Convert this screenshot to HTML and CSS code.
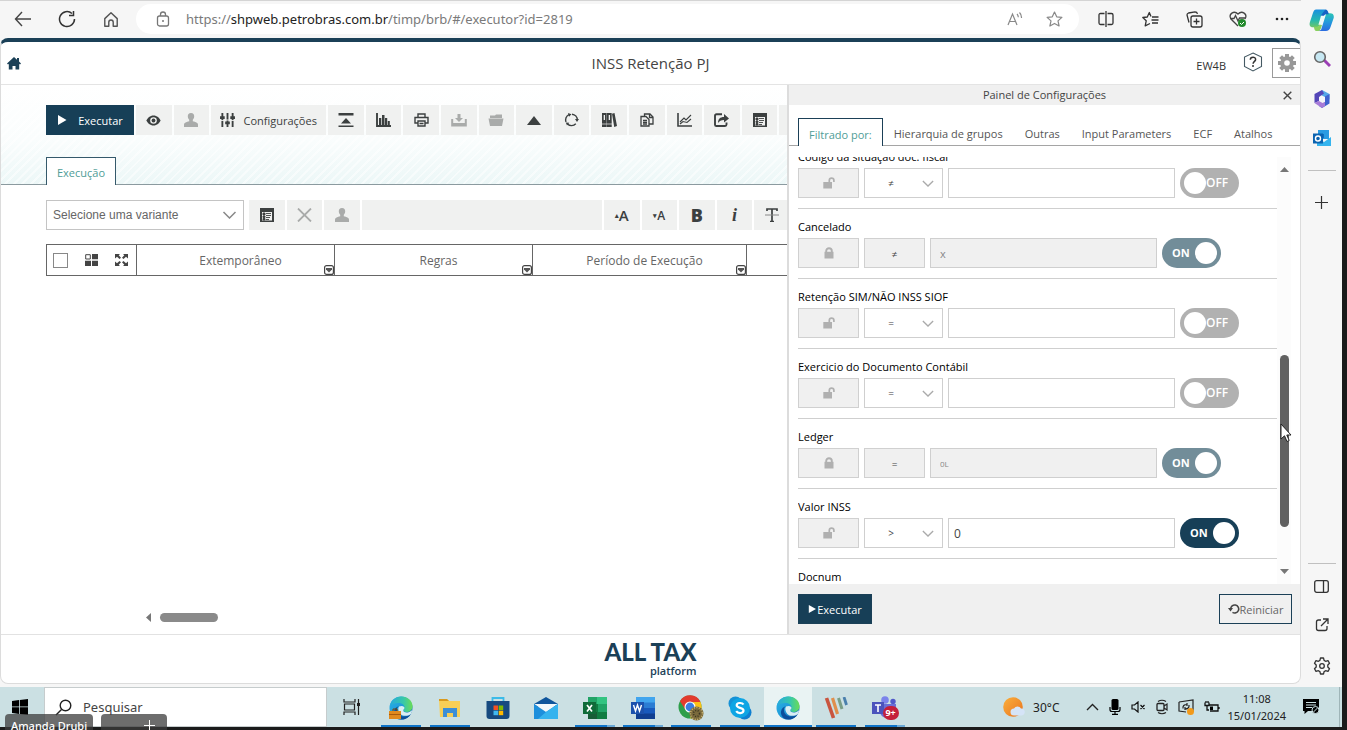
FILE: index.html
```html
<!DOCTYPE html>
<html lang="pt-BR">
<head>
<meta charset="utf-8">
<title>INSS Retenção PJ</title>
<link rel="stylesheet" href="styles.css">
</head>
<body>
<svg class="defs" aria-hidden="true">
  <defs>
    <linearGradient id="edge-a" x1="0" y1="0" x2="1" y2="1"><stop offset="0" stop-color="#2bb3e8"/><stop offset=".5" stop-color="#1f9bd8"/><stop offset="1" stop-color="#0c59a4"/></linearGradient>
    <linearGradient id="edge-b" x1="0" y1="0" x2="1" y2="0"><stop offset="0" stop-color="#27a9dd"/><stop offset=".6" stop-color="#38c8a8"/><stop offset="1" stop-color="#6bdc55"/></linearGradient>
    <linearGradient id="cop" x1="0" y1="0" x2="0" y2="1"><stop offset="0" stop-color="#1a8fe0"/><stop offset=".6" stop-color="#25b8b0"/><stop offset="1" stop-color="#6cc66a"/></linearGradient>
    <linearGradient id="cop2" x1="0" y1="0" x2="0" y2="1"><stop offset="0" stop-color="#2cc5b5"/><stop offset=".5" stop-color="#2399dc"/><stop offset="1" stop-color="#2a6be0"/></linearGradient>
    <linearGradient id="sun" x1="0" y1="0" x2="1" y2="1"><stop offset="0" stop-color="#fbb03b"/><stop offset="1" stop-color="#e8731f"/></linearGradient>
  </defs>
  <symbol id="user" viewBox="0 0 16 16"><path d="M8 1c2.300 0 3.200 1.500 3.200 3.300 0 1.500-.6 2.700-1.400 3.500v1.500c2.700.7 5.200 1.500 5.200 3.200V15H1v-2.500c0-1.700 2.500-2.500 5.200-3.200V7.800C5.400 7 4.800 5.800 4.800 4.300 4.800 2.500 5.700 1 8 1z" fill="currentColor"/></symbol>
  <symbol id="form" viewBox="0 0 16 16"><path d="M1 1h14v14H1zM3 5v8.500h10V5z" fill="currentColor" fill-rule="evenodd"/><path d="M4 6h2v2H4zM4 9h2v1.500H4zM4 11.500h2V13H4zM7 6.500h5M7 8.500h5M7 10.500h4M7 12.500h3" stroke="currentColor" fill="currentColor" stroke-width=".9"/></symbol>
  <symbol id="chev" viewBox="0 0 14 8"><path d="M1 1l6 6 6-6" fill="none" stroke="currentColor" stroke-width="1.500"/></symbol>
  <symbol id="lock" viewBox="0 0 12 12"><path d="M3.200 5V4a2.800 2.800 0 0 1 5.600 0v1" fill="none" stroke="currentColor" stroke-width="1.900"/><path d="M1.500 4.800h9v6.700h-9z" fill="currentColor"/></symbol>
  <symbol id="unlock" viewBox="0 0 12 12"><path d="M6.300 6V3.500a2.300 2.300 0 0 1 4.600 0V5" fill="none" stroke="currentColor" stroke-width="1.700"/><path d="M.3 5h8.700v6.500H.3z" fill="currentColor"/></symbol>
  <symbol id="menu" viewBox="0 0 10 10"><rect x=".6" y=".6" width="8.800" height="8.800" rx="2" fill="#fff" stroke="#444" stroke-width="1.200"/><path d="M2 3h6v1.500L5 7.500 2 4.500z" fill="#555"/></symbol>
  <symbol id="play" viewBox="0 0 10 10"><path d="M1 0l8.500 5L1 10z" fill="currentColor"/></symbol>
  <symbol id="edge" viewBox="0 0 24 24"><circle cx="12" cy="12" r="11.500" fill="url(#edge-a)"/><path d="M1 10C2 4 7 .5 12.500.5 19 .5 23.500 5 23.500 10c0 4-3 6-6 6-3 0-3.600-1.200-3-2 .8-1 1-1.600 1-2.500C15.500 9 13 7 9.500 7 5.500 7 2.300 8.500 1 10z" fill="url(#edge-b)"/><path d="M8 13c-.5 5 3.500 8 8 7.500 2.500-.2 4.500-1.200 6-2.500-2 3.500-5.500 5.500-9.500 5.500C7 23.500 4.500 19 5 15.500 5.500 12 8 10.500 10 10.500 8.700 11 8.100 12 8 13z" fill="#0b4f9c"/><path d="M10 10.500c3.500-1.500 5.500 0 5.500 1.500-.2 1-1.400 1.600-1.200 2.700.3 1.500 3 2.400 6 1.200 1.300-.4 2.300-1.200 2.900-2.200-.1 1.800-.8 3.500-1.700 4.600-3 2.200-8 2.100-10.200-.4-2-2.300-2.600-5.500-1.300-7.400z" fill="#d9eef3"/></symbol>
</svg>

<div class="screen">
  <div class="window">
    <div class="browser">
      <nav class="bar" aria-label="Navegador">
        <button class="nav" aria-label="Voltar"><svg width="18" height="16" viewBox="0 0 18 16"><path d="M17 8H1.500M8 1L1.500 8 8 15" fill="none" stroke="#444" stroke-width="1.400"/></svg></button>
        <button class="nav" aria-label="Atualizar"><svg width="18" height="18" viewBox="0 0 18 18"><path d="M16.500 9A7.500 7.500 0 1 1 14 3.500M15.500 1v4.500H11" fill="none" stroke="#333" stroke-width="1.500"/></svg></button>
        <button class="nav" aria-label="Início"><svg width="16" height="17" viewBox="0 0 18 18"><path d="M2 8l7-6.500L16 8v8.500h-4.500V12a2.500 2.500 0 0 0-5 0v4.500H2z" fill="none" stroke="#555" stroke-width="1.600" stroke-linejoin="round"/></svg></button>
        <div class="address">
          <svg width="14" height="16" viewBox="0 0 14 16"><rect x="1.500" y="5" width="11" height="10" rx="2" fill="none" stroke="#777" stroke-width="1.300"/><path d="M4.500 5V3.500a2.500 2.500 0 0 1 5 0V5" fill="none" stroke="#777" stroke-width="1.300"/><circle cx="7" cy="10" r="1" fill="#777"/></svg>
          <a class="url" href="#">https://<b>shpweb.petrobras.com.br</b>/timp/brb/#/executor?id=2819</a>
          <button class="small" aria-label="Ler em voz alta"><svg width="16" height="16" viewBox="0 0 16 16"><path d="M1 14L5.500 3 10 14M2.500 10.500h6M10 3c1 1 1.300 2 1.300 3.300M12.500 1.500C14 3 14.600 5 14.500 7" fill="none" stroke="#888" stroke-width="1.200"/></svg></button>
          <button class="small" aria-label="Favorito"><svg width="17" height="16" viewBox="0 0 17 16"><path d="M8.500 1l2.200 4.800 5.200.6-3.900 3.500 1.100 5.100-4.600-2.600L3.900 15 5 9.900 1.100 6.400l5.200-.6z" fill="none" stroke="#888" stroke-width="1.200" stroke-linejoin="round"/></svg></button>
        </div>
        <div class="tools">
          <button class="nav" aria-label="Tela dividida"><svg width="16" height="16" viewBox="0 0 16 16"><path d="M6.500 2.500h-4q-1.500 0-1.500 1.500v8q0 1.500 1.500 1.500h4M9.500 2.500h4Q15 2.500 15 4v8q0 1.500-1.500 1.500h-4M8 0v16" fill="none" stroke="#333" stroke-width="1.300"/></svg></button>
          <button class="nav" aria-label="Favoritos"><svg width="17" height="16" viewBox="0 0 17 16"><path d="M9 5.500L7.300 1.500 5.300 6l-4.500.5 3.400 3.300-1 5L8 12.500M10 6h6.500M9.500 9h7M10 12h6" fill="none" stroke="#333" stroke-width="1.300" stroke-linejoin="round"/></svg></button>
          <button class="nav" aria-label="Coleções"><svg width="17" height="17" viewBox="0 0 17 17"><rect x="5" y="5" width="11" height="11" rx="2" fill="none" stroke="#333" stroke-width="1.300"/><path d="M10.500 7.500v6M7.500 10.500h6M3 11.500L1 4q0-1.500 1.500-2L9 .8q2 0 2.500 2" fill="none" stroke="#333" stroke-width="1.300"/></svg></button>
          <button class="nav" aria-label="Desempenho"><svg width="18" height="17" viewBox="0 0 18 17"><path d="M9 15L2 8C-1 3 5-1 9 3c4-4 10 0 7 5M1 7.500h4l1.500-3L9 10l1.500-3H16" fill="none" stroke="#444" stroke-width="1.300"/><circle cx="13" cy="12" r="4" fill="#238a2c"/><path d="M11 12l1.500 1.500L15 11" fill="none" stroke="#fff"/></svg></button>
          <button class="nav" aria-label="Mais"><svg width="14" height="4" viewBox="0 0 14 4"><g fill="#222"><circle cx="2" cy="2" r="1.300"/><circle cx="7" cy="2" r="1.300"/><circle cx="12" cy="2" r="1.300"/></g></svg></button>
        </div>
      </nav>

      <div class="page">
        <header class="head">
          <a href="#" class="home" aria-label="Início"><svg width="14" height="13" viewBox="0 0 14 13"><path d="M7 0l3 2.700V1h2v3.500L14 6.500l-1 1-.8-.7V12.500H8.500V9h-3v3.500H1.800V6.800L1 7.500l-1-1z" fill="#1b4057"/></svg></a>
          <h1>INSS Retenção PJ</h1>
          <div class="account">
            <span>EW4B</span>
            <button class="help" aria-label="Ajuda"><svg width="20" height="20" viewBox="0 0 20 20"><path d="M10 1l8.500 4v9.500L10 19l-8.500-4.500V5z" fill="none" stroke="#455a64" stroke-width="1.100"/><path d="M7.300 7.800c0-3.600 5.500-3.400 5.300-.2-.1 1.800-2.500 1.900-2.500 4.200" fill="none" stroke="#333" stroke-width="1.500"/><circle cx="10" cy="14" r="1" fill="#333"/></svg></button>
            <button class="gear" aria-label="Configurações"><svg width="18" height="18" viewBox="-9 -9 18 18"><g fill="#989898"><g id="teeth"><rect x="-2" y="-9" width="4" height="18"/><rect x="-9" y="-2" width="18" height="4"/></g><use href="#teeth" transform="rotate(45)"/><circle r="6.800"/></g><circle r="2.800" fill="#fff"/></svg></button>
          </div>
        </header>

        <div class="content">
          <main class="main">
            <section class="hero">
              <div class="toolbar">
                <button class="run"><svg width="10" height="10"><use href="#play"/></svg>Executar</button>
                <button aria-label="Visualizar"><svg width="15" height="11" viewBox="0 0 15 11"><path d="M7.500 0.500C11 .5 13.500 3 14.500 5.500 13.500 8 11 10.500 7.500 10.500S1.500 8 .5 5.500C1.500 3 4 .5 7.500.5z" fill="currentColor"/><circle cx="7.500" cy="5.500" r="3.300" fill="#f0f1f0"/><circle cx="7.500" cy="5.500" r="1.900" fill="currentColor"/></svg></button>
                <button disabled aria-label="Usuário"><svg width="16" height="16"><use href="#user"/></svg></button>
                <button class="config"><svg width="15" height="14" viewBox="0 0 16 15"><path d="M2.500 0v15M8 0v15M13.500 0v15" stroke="currentColor" stroke-width="2"/><path d="M0 3.500h5v3H0zM5.500 9h5v3h-5zM11 3.500h5v3h-5z" fill="currentColor"/><path d="M0 8h5M5.500 7.500h5M11 8h5" stroke="#f0f1f0"/></svg>Configurações</button>
                <button aria-label="Cabeçalho"><svg width="16" height="14" viewBox="0 0 16 14"><path d="M.5 0h15v2.500H.5zM.5 12.500h15V14H.5zM8 5l5 5.500H3z" fill="currentColor"/></svg></button>
                <button aria-label="Gráfico"><svg width="15" height="14" viewBox="0 0 15 14"><path d="M1 0v13h14" fill="none" stroke="currentColor" stroke-width="1.900"/><path d="M3 5h2.300v7H3zM6 2h2.500v10H6zM9 5h2.200v7H9zM11.800 8h2v4h-2z" fill="currentColor"/></svg></button>
                <button aria-label="Imprimir"><svg width="15" height="14" viewBox="0 0 15 14"><path d="M4 4V1h7v3M4 10H1V4.500h13V10h-3M4 8h7v5H4zM5.500 10.500h4" fill="none" stroke="currentColor" stroke-width="1.400"/></svg></button>
                <button disabled aria-label="Importar"><svg width="16" height="13" viewBox="0 0 16 13"><path d="M1.200 5v6.500h13.600V5" fill="none" stroke="currentColor" stroke-width="2"/><path d="M6.500 0h3v4H12L8 8 4 4h2.500zM1 9h14v3H1z" fill="currentColor"/></svg></button>
                <button disabled aria-label="Abrir"><svg width="16" height="12" viewBox="0 0 16 12"><path d="M2 4V1.500h5L8 .5h6V4zM.5 4.500h15L14 12H2z" fill="currentColor"/></svg></button>
                <button aria-label="Subir"><svg width="14" height="9" viewBox="0 0 14 9"><path d="M7 0l7 9H0z" fill="currentColor"/></svg></button>
                <button aria-label="Atualizar"><svg width="15" height="14" viewBox="0 0 15 14"><path d="M2 9A5.800 5.800 0 0 1 5 1.600M8 1.200A5.800 5.800 0 0 1 13.300 7M11.800 10.800A5.800 5.800 0 0 1 3.500 11" fill="none" stroke="currentColor" stroke-width="1.400"/><path d="M4 0l3.500 1.200L5 3.800zM11 6h4l-2 3zM1.800 9.500l3.500.3L3 12.600z" fill="currentColor"/></svg></button>
                <button aria-label="Biblioteca"><svg width="15" height="14" viewBox="0 0 15 14"><path d="M0 0h4.700v14H0zM5 0h4.700v14H5zM10 .7L12.500 0 15 13l-2.800 1z" fill="currentColor"/><path d="M1.700 2v5h1.300V2zM6.700 2v5h1.300V2z" fill="#f0f1f0"/><path d="M0 11h10" stroke="#f0f1f0" stroke-width=".7"/></svg></button>
                <button aria-label="Copiar"><svg width="14" height="14" viewBox="0 0 14 14"><path d="M4.500 3V1H10l3 3v7H9.500M1 3.500h5l3 3V13H1zM3 7.500h4M3 9.500h4M3 11.200h4M9.500 1v3.500H13" fill="none" stroke="currentColor" stroke-width="1.300"/></svg></button>
                <button aria-label="Linhas"><svg width="15" height="14" viewBox="0 0 15 14"><path d="M1 0v13h14" fill="none" stroke="currentColor" stroke-width="1.600"/><path d="M3 9l4-4 2 2 5-5M3 11l3-2.500 4 1L14 6" fill="none" stroke="currentColor" stroke-width="1.100"/></svg></button>
                <button aria-label="Exportar"><svg width="15" height="14" viewBox="0 0 15 14"><path d="M8 1.200H2.500Q1 1.200 1 2.700v9Q1 13 2.500 13H11q1.500 0 1.500-1.500V9.500" fill="none" stroke="currentColor" stroke-width="1.900"/><path d="M4 10c0-4 2-6 6-6V1l5 4.500-5 4V7C7 7 5.500 8 4 10z" fill="currentColor"/></svg></button>
                <button aria-label="Formulário"><svg width="16" height="16"><use href="#form"/></svg></button>
                <button aria-label="Mais"></button>
              </div>
              <div class="tabs"><button class="tab">Execução</button></div>
            </section>

            <section class="work">
              <div class="variant">
                <span class="pick"><select aria-label="Variante"><option>Selecione uma variante</option></select><svg width="15" height="8"><use href="#chev"/></svg></span>
                <button aria-label="Formulário"><svg width="16" height="16"><use href="#form"/></svg></button>
                <button disabled aria-label="Excluir"><svg width="15" height="14" viewBox="0 0 15 14"><path d="M1 .5l13 13M14 .5l-13 13" stroke="currentColor" stroke-width="1.800"/></svg></button>
                <button disabled aria-label="Usuário"><svg width="16" height="16"><use href="#user"/></svg></button>
                <span class="blank"></span>
                <button class="big" aria-label="Aumentar fonte"><i class="dot">▴</i>A</button>
                <button class="less" aria-label="Diminuir fonte"><i class="dot">▾</i>A</button>
                <button class="bold">B</button>
                <button class="ital">i</button>
                <button class="strike" aria-label="Tachado"><svg width="14" height="14" viewBox="0 0 14 14"><path d="M2 3V1h10v2M7 1v13M5 13.500h4" fill="none" stroke="currentColor" stroke-width="1.700"/><path d="M0 7h14" stroke="#888"/></svg></button>
              </div>
              <table class="grid">
                <tr>
                  <th class="c0"><span class="picks"><input type="checkbox" aria-label="Selecionar tudo"><svg width="13" height="12" viewBox="0 0 13 12"><path d="M.7.7h4.600v4.300H.7z" fill="none" stroke="#444"/><path d="M7 0h6v5.300H7zM0 6.700h6V12H0zM7 6.700h6V12H7z" fill="#444"/></svg><svg width="13" height="12" viewBox="0 0 13 12"><path d="M0 0h5L3.700 1.300 6 3.800 4.500 5 2 2.700 0 4.500zM13 0H8l1.300 1.300L7 3.800 8.500 5 11 2.700l2 1.800zM0 12h5l-1.300-1.300L6 8.200 4.500 7 2 9.300 0 7.500zM13 12H8l1.300-1.300L7 8.200 8.500 7 11 9.300l2-1.800z" fill="#444"/></svg></span></th>
                  <th class="c1">Extemporâneo<svg class="corner" width="10" height="10"><use href="#menu"/></svg></th>
                  <th class="c1">Regras<svg class="corner" width="10" height="10"><use href="#menu"/></svg></th>
                  <th class="c2">Período de Execução<svg class="corner" width="10" height="10"><use href="#menu"/></svg></th>
                  <th></th>
                </tr>
              </table>
              <div class="hscroll"><svg width="5" height="9" viewBox="0 0 5 9"><path d="M5 0v9L0 4.500z" fill="#777"/></svg><span></span></div>
            </section>
          </main>

          <aside class="panel">
            <div class="ptitle"><h2>Painel de Configurações</h2><button aria-label="Fechar"><svg width="9" height="9" viewBox="0 0 9 9"><path d="M.7.7l7.600 7.600M8.300.7L.7 8.300" stroke="#444" stroke-width="1.400"/></svg></button></div>
            <div class="ptabs">
              <button class="on">Filtrado por:</button><button>Hierarquia de grupos</button><button>Outras</button><button>Input Parameters</button><button>ECF</button><button>Atalhos</button>
            </div>
            <div class="body">
              <div class="list">
                <div class="row"><label for="f1">Codigo da situação doc. fiscal</label><div class="ctl">
                  <button class="lk" aria-label="Bloquear"><svg width="12" height="12"><use href="#unlock"/></svg></button>
                  <span class="op"><select aria-label="Operador"><option>≠</option></select><svg width="12" height="7"><use href="#chev"/></svg></span>
                  <input id="f1" type="text"><label class="sw"><input type="checkbox"><span>OFF</span></label></div></div>
                <div class="row off"><label for="f2">Cancelado</label><div class="ctl">
                  <button class="lk" aria-label="Bloqueado"><svg width="12" height="12"><use href="#lock"/></svg></button>
                  <button class="lk fix">≠</button>
                  <input id="f2" type="text" value="x" disabled><label class="sw"><input type="checkbox" checked disabled><span>ON</span></label></div></div>
                <div class="row"><label for="f3">Retenção SIM/NÃO INSS SIOF</label><div class="ctl">
                  <button class="lk" aria-label="Bloquear"><svg width="12" height="12"><use href="#unlock"/></svg></button>
                  <span class="op"><select aria-label="Operador"><option>=</option></select><svg width="12" height="7"><use href="#chev"/></svg></span>
                  <input id="f3" type="text"><label class="sw"><input type="checkbox"><span>OFF</span></label></div></div>
                <div class="row"><label for="f4">Exercicio do Documento Contábil</label><div class="ctl">
                  <button class="lk" aria-label="Bloquear"><svg width="12" height="12"><use href="#unlock"/></svg></button>
                  <span class="op"><select aria-label="Operador"><option>=</option></select><svg width="12" height="7"><use href="#chev"/></svg></span>
                  <input id="f4" type="text"><label class="sw"><input type="checkbox"><span>OFF</span></label></div></div>
                <div class="row off"><label for="f5">Ledger</label><div class="ctl">
                  <button class="lk" aria-label="Bloqueado"><svg width="12" height="12"><use href="#lock"/></svg></button>
                  <button class="lk fix">=</button>
                  <input id="f5" class="tiny" type="text" value="0L" disabled><label class="sw"><input type="checkbox" checked disabled><span>ON</span></label></div></div>
                <div class="row"><label for="f6">Valor INSS</label><div class="ctl">
                  <button class="lk" aria-label="Bloquear"><svg width="12" height="12"><use href="#unlock"/></svg></button>
                  <span class="op"><select aria-label="Operador"><option>&gt;</option></select><svg width="12" height="7"><use href="#chev"/></svg></span>
                  <input id="f6" type="text" value="0"><label class="sw"><input type="checkbox" checked><span>ON</span></label></div></div>
                <div class="row"><span class="name">Docnum</span></div>
              </div>
              <div class="vscroll"><svg width="9" height="5" viewBox="0 0 9 5"><path d="M0 5h9L4.500 0z" fill="#777"/></svg><span></span><svg width="9" height="5" viewBox="0 0 9 5"><path d="M0 0h9L4.500 5z" fill="#777"/></svg></div>
            </div>
            <div class="pfoot">
              <button class="go"><svg width="8" height="8" viewBox="0 0 10 10"><path d="M1 0l9 5-9 5z" fill="#fff"/></svg>Executar</button>
              <button class="reset"><svg width="12" height="10" viewBox="0 0 12 10"><path d="M2.700 5A4 4 0 1 1 4.500 8.300" fill="none" stroke="#444" stroke-width="1.600"/><path d="M0 4h5L2.500 7.500z" fill="#444"/></svg>Reiniciar</button>
            </div>
          </aside>
        </div>

        <footer class="foot"><div class="logo"><strong>ALL TAX</strong><span>platform</span></div></footer>
      </div>
    </div>

    <aside class="side" aria-label="Barra lateral">
      <svg width="25" height="24" viewBox="0 0 26 24"><path d="M7.500 1H17l-5 15c-.8 2.500-2 3.500-4 3.500H4c-3 0-4-2.500-3-5.500L4 5C4.800 2.500 5.500 1 7.500 1z" fill="url(#cop)"/><path d="M18 5h4c3 0 4.500 2 3.500 5.500L22.500 19c-1 3-2.500 4.500-5 4.500H8.500l4-1z" fill="url(#cop2)"/><path d="M17 1c2 0 2.500 1.500 3 3l.6 2H18c-2 0-2.500 1.500-3 3.500L12.500 7z" fill="#1762c4"/><path d="M8.500 23.500c-2 0-2.600-1.200-3-2.500L5 19h3c2 0 2.800-1 3.500-3l2 1.500-1.500 4c-.5 1.400-1.600 2-3.500 2z" fill="#8ad05f"/><path d="M12.500 7.500h3.800L13.500 17H9.800z" fill="#eafaf8"/></svg>
      <svg width="18" height="18" viewBox="0 0 18 18"><path d="M11 10l6 6" stroke="#9b3fb5" stroke-width="3"/><circle cx="7" cy="7" r="5.300" fill="#c7e8f3" stroke="#666" stroke-width="1.600"/></svg>
      <svg width="18" height="18" viewBox="0 0 18 18"><path d="M9 0l7.500 4v5.500L11 6.500 8 5z" fill="#53a7e8"/><path d="M9 0L1.500 4v9L6 11V7l5-3.500z" fill="#5446b8"/><path d="M16.500 4v9.500L9 18l-3-2 6-4V6.500z" fill="#3f62cf"/><path d="M1.500 13L6 11l3.500 2 2.500-1v4l-3 2z" fill="#a77bd8"/><circle cx="9" cy="9" r="2.600" fill="#f4f6fb"/></svg>
      <svg width="18" height="17" viewBox="0 0 18 17"><path d="M5 0h11v9H5z" fill="#2a9be2"/><path d="M5 4h6v4H5z" fill="#0f6cbd"/><path d="M4 8l7 4 7-5v9H4z" fill="#35b4ee"/><path d="M0 3.500h10v10H0z" fill="#0b63b0"/><circle cx="5" cy="8.500" r="2.500" fill="none" stroke="#fff" stroke-width="1.400"/></svg>
      <hr>
      <svg class="plus" width="13" height="13" viewBox="0 0 13 13"><path d="M6.500 0v13M0 6.500h13" stroke="#333" stroke-width="1.200"/></svg>
      <hr class="low">
      <svg width="15" height="13" viewBox="0 0 15 13"><rect x=".7" y=".7" width="13.600" height="11.600" rx="2" fill="none" stroke="#333" stroke-width="1.300"/><path d="M9.500 1v11" stroke="#333" stroke-width="1.300"/></svg>
      <svg width="14" height="14" viewBox="0 0 14 14"><path d="M6 2H3.500Q1.500 2 1.500 4v6.500q0 2 2 2H10q2 0 2-2V8M8 1h5v5M13 1L6 8" fill="none" stroke="#333" stroke-width="1.300"/></svg>
      <svg width="18" height="18" viewBox="0 0 18 18"><path d="M7.500 1h3l.6 2.400 1.500.9 2.400-.7 1.500 2.600L14.800 8v2l1.700 1.800-1.500 2.600-2.400-.7-1.500.9-.6 2.400h-3l-.6-2.400-1.500-.9-2.400.7-1.500-2.600L3.200 10V8L1.500 6.200 3 3.600l2.400.7 1.500-.9z" fill="none" stroke="#333" stroke-width="1.300" stroke-linejoin="round"/><circle cx="9" cy="9" r="2.300" fill="none" stroke="#333" stroke-width="1.300"/></svg>
    </aside>
  </div>

  <div class="taskbar">
    <button class="start" aria-label="Iniciar"><svg width="16" height="16" viewBox="0 0 16 16"><path d="M0 2l7-1v6.500H0zM7.800.9L16 0v7.500H7.800zM0 8.300h7V15l-7-1zM7.800 8.300H16V16l-8.200-1.100z" fill="#000"/></svg></button>
    <label class="search"><svg width="17" height="17" viewBox="0 0 17 17"><circle cx="10.500" cy="6.500" r="5.300" fill="none" stroke="#222" stroke-width="1.400"/><path d="M6.500 10.500L1 16" stroke="#222" stroke-width="1.400"/></svg><input type="text" placeholder="Pesquisar"></label>
    <button class="view" aria-label="Visão de tarefas"><svg width="17" height="16" viewBox="0 0 17 16"><path d="M1 0v3h11V0M1 16v-3h11v3M1.500 5h10v6h-10zM15.500 0v16" fill="none" stroke="#222" stroke-width="1.200"/><path d="M14 4h3v3h-3z" fill="#222"/></svg></button>
    <div class="apps">
      <button class="run1" aria-label="Edge trabalho"><svg width="24" height="24" viewBox="0 0 24 24"><use href="#edge"/><path d="M0 15h12v8H0z" fill="#e08a1e"/><path d="M0 18.500h12" stroke="#a85a0c"/><path d="M4 15v-2h4v2" fill="none" stroke="#7a4408"/></svg></button>
      <button class="run1" aria-label="Explorador"><svg width="22" height="20" viewBox="0 0 22 20"><path d="M0 1h8l2 2h11v16H1z" fill="#f8cf56"/><path d="M0 1h8l2 2H0z" fill="#d99a1e"/><path d="M4 10h14v9h-4v-4H8v4H4z" fill="#3d8fd6"/></svg></button>
      <button aria-label="Loja"><svg width="24" height="24" viewBox="0 0 24 24"><path d="M6.500 5V2h11v3" fill="none" stroke="#3cbbe8" stroke-width="1.800"/><path d="M.5 5h23v15q0 3-3 3h-17q-3 0-3-3z" fill="#164a80"/><path d="M7.500 9.500H12V14H7.500z" fill="#f25022"/><path d="M12.700 9.500h4.500V14h-4.500z" fill="#7fba00"/><path d="M7.500 14.700H12v4.500H7.500z" fill="#41b9f0"/><path d="M12.700 14.700h4.500v4.500h-4.500z" fill="#ffb900"/></svg></button>
      <button aria-label="Email"><svg width="24" height="22" viewBox="0 0 24 22"><path d="M0 7l12-7 12 7v3H0z" fill="#0f559c"/><path d="M0 7h24L12 15z" fill="#f2f8fb"/><path d="M0 7l12 8 12-8v15H0z" fill="#1d8fdc"/><path d="M24 7v15H4l8-7z" fill="#35b3ee"/></svg></button>
      <button class="run2" aria-label="Excel"><svg width="24" height="22" viewBox="0 0 24 22"><path d="M5 0h19v22H5z" fill="#21a366"/><path d="M14 0h10v7H14z" fill="#33c481"/><path d="M5 7h10v8H5zM14 15h10v7H14z" fill="#107c41"/><path d="M5 15h9v7H5z" fill="#185c37"/><path d="M0 5h13v12H0z" fill="#0f6b39"/><path d="M4 8l5 6.500M9 8l-5 6.500" stroke="#fff" stroke-width="1.700"/></svg></button>
      <button class="run2" aria-label="Word"><svg width="24" height="22" viewBox="0 0 24 22"><path d="M5 0h19v6H5z" fill="#41a5ee"/><path d="M5 5.500h19V11H5z" fill="#2b7cd3"/><path d="M5 11h19v6H5z" fill="#185abd"/><path d="M5 16.500h19V22H5z" fill="#103f91"/><path d="M0 5h13v12H0z" fill="#1c52ad"/><path d="M2.500 8l2 6 2-6 2 6 2-6" fill="none" stroke="#fff" stroke-width="1.400"/></svg></button>
      <button class="run1" aria-label="Chrome"><svg width="26" height="26" viewBox="0 0 26 26"><circle cx="12" cy="12" r="11.500" fill="#2e9e4a"/><path d="M2 6.200A11.500 11.500 0 0 1 22.500 7H12L7 14z" fill="#e23b2e"/><path d="M22.500 7A11.500 11.500 0 0 1 12 23.500L17 14 15 7z" fill="#fbc116"/><circle cx="12" cy="12" r="5.500" fill="#fff"/><circle cx="12" cy="12" r="4.400" fill="#3b7de0"/><circle cx="18.500" cy="18.500" r="7" fill="#7a6a3c"/><circle cx="18.500" cy="18.500" r="6" fill="none" stroke="#cbb572" stroke-width="1.500" stroke-dasharray="1 1.500"/><circle cx="18.500" cy="18.500" r="3" fill="none" stroke="#3a3320" stroke-width="1.500" stroke-dasharray="1 1.500"/></svg></button>
      <button class="run1" aria-label="Skype"><svg width="24" height="24" viewBox="0 0 24 24"><circle cx="7.500" cy="7.500" r="7" fill="#1591d6"/><circle cx="16.500" cy="16.500" r="7" fill="#0f7fd0"/><circle cx="12" cy="12" r="10" fill="#0ea5e4"/><path d="M15.500 8.500C14 6.300 8.700 6.500 8.700 9.300c0 3.200 6.800 1.900 6.800 5.300 0 3-5.600 3.300-7.300.6" fill="none" stroke="#fff" stroke-width="2.200"/></svg></button>
      <button class="active" aria-label="Edge"><svg width="24" height="24"><use href="#edge"/></svg></button>
      <button class="run1" aria-label="App"><svg width="24" height="22" viewBox="0 0 24 22"><path d="M2.500 1l7 20" stroke="#c9553f" stroke-width="3.600"/><path d="M8.500 1l5 16" stroke="#e08e4b" stroke-width="3.200"/><path d="M14.500 1l3.500 11" stroke="#7a9e86" stroke-width="3"/><path d="M20 0l2.500 8" stroke="#4a80ad" stroke-width="2.800"/></svg></button>
      <button class="run2" aria-label="Teams"><svg width="26" height="26" viewBox="0 0 26 26"><circle cx="13" cy="5" r="3.800" fill="#7b83eb"/><circle cx="21" cy="6.500" r="2.700" fill="#5059c9"/><path d="M8 9h16v8q-1 6-8 6t-8-6z" fill="#6a6fd6"/><path d="M0 7h12v12H0z" fill="#4b53bc"/><path d="M3 10h6M6 10v7" stroke="#fff" stroke-width="1.600"/></svg><span class="badge">9+</span></button>
    </div>
    <div class="tray">
      <svg width="23" height="21" viewBox="0 0 23 21"><circle cx="10" cy="10" r="9.800" fill="url(#sun)"/><path d="M11 18.500a3.500 3.500 0 0 1 0-7 4 4 0 0 1 7 0c5 0 5 7 0 7z" fill="#d5e4f7"/></svg>
      <span class="temp">30°C</span>
      <span class="icons">
        <svg width="13" height="8" viewBox="0 0 13 8"><path d="M1 7l5.500-5.500L12 7" fill="none" stroke="#222" stroke-width="1.400"/></svg>
        <svg width="12" height="16" viewBox="0 0 12 16"><rect x="2.500" y="0" width="7" height="11" rx="1.500"/><path d="M1 8v2.500q0 2 2 2h6q2 0 2-2V8M6 12v3M3 15.300h6" fill="none" stroke="#000" stroke-width="1.200"/></svg>
        <svg width="15" height="12" viewBox="0 0 15 12"><path d="M1 4h2.500L7 1v10L3.500 8H1zM9.500 4l4 4M13.500 4l-4 4" fill="none" stroke="#111" stroke-width="1.200"/></svg>
        <svg width="12" height="16" viewBox="0 0 12 16"><rect x="1" y="4.500" width="7" height="7" rx="1" fill="none" stroke="#222" stroke-width="1.300"/><path d="M8 7l3-2v6L8 9M2 2.500q4-2.500 8 0M2 13.500q4 2.500 8 0" fill="none" stroke="#222" stroke-width="1.200"/></svg>
        <svg width="16" height="16" viewBox="0 0 16 16"><path d="M1 3l14-2v12M1 3v9l7 1M5 9.500q-.5-4 4-4M9 4v3M11 6q.5 4-4 4M7 11V8" fill="none" stroke="#222" stroke-width="1.200"/><circle cx="12.500" cy="12.500" r="3.500" fill="#f29a1a"/></svg>
        <svg width="16" height="12" viewBox="0 0 16 12"><path d="M5 4h9v6H6M15 6v2M1 1.500v3h4v-3M3 5v4h2M2 0v2M4 0v2" fill="none" stroke="#111" stroke-width="1.300"/><path d="M6 5.500h3V9H6z"/></svg>
      </span>
      <time class="clock">11:08<br>15/01/2024</time>
      <svg width="17" height="16" viewBox="0 0 17 16"><path d="M0 0h16v12H5l-3.500 3V12H0z"/><path d="M3 3.500h10M3 6h10M3 8.500h6" stroke="#cbe0e3"/><circle cx="12.500" cy="11" r="3.500" fill="#000" stroke="#cbe0e3"/><path d="M10.500 13l4-4" stroke="#cbe0e3"/></svg>
    </div>
  </div>
</div>

<div class="call"><span>Amanda Drubi</span><span class="add"><svg width="11" height="11" viewBox="0 0 11 11"><path d="M5.500 0v11M0 5.500h11" stroke="#fff"/></svg></span></div>
<svg class="cursor" width="12" height="20" viewBox="0 0 12 20"><path d="M1 1v15l3.500-3.200L7 18.500l2.200-1L6.800 12H11z" fill="#fff" stroke="#222"/></svg>
</body>
</html>
```
FILE: styles.css
```css
* { box-sizing: border-box; }
body { margin: 0; background: #1b1b1b; font-family: "Open Sans", "Noto Sans", sans-serif; font-size: 11px; color: #444; overflow: hidden; }
button, input, select { font: inherit; color: inherit; margin: 0; padding: 0; border: 0; background: none; border-radius: 0; }
button { display: flex; align-items: center; justify-content: center; }
svg { display: block; flex: none; }
h1, h2 { margin: 0; font-weight: 400; }
.defs { position: absolute; width: 0; height: 0; }
.screen { height: 100vh; padding: 0 5px 3px 0; display: flex; flex-direction: column; }
.window { flex: 1; min-height: 0; display: flex; background: #f6f6f6; }
.browser { flex: 1; min-width: 0; display: flex; flex-direction: column; padding-bottom: 3px; }

.bar { height: 38px; flex: none; display: flex; align-items: center; border-top: 1px solid #d4d4d4; padding: 0 0 1px 1px; }
.nav { width: 44px; height: 30px; flex: none; }
.address { flex: 1; height: 30px; margin: 0 5px 0 3px; padding: 0 16px 0 20px; display: flex; align-items: center; background: #fff; border-radius: 15px; }
.url { flex: 1; margin-left: 16px; font-family: "Noto Sans", sans-serif; font-size: 13px; color: #7a7a7a; text-decoration: none; white-space: nowrap; }
.url b { font-weight: 400; color: #222; }
.small { width: 18px; height: 24px; margin-left: 21px; }
.tools { display: flex; margin-right: -3px; }

.page { flex: 1; min-height: 0; display: flex; flex-direction: column; background: #fff; border: 1px solid #dcdcdc; border-top: 4px solid #1b4057; border-radius: 8px; overflow: hidden; }
.head { height: 43px; flex: none; display: grid; grid-template-columns: 1fr auto 1fr; align-items: center; border-bottom: 1px solid #e4e4e4; }
.home { margin-left: 6px; justify-self: start; }
.head h1 { font-size: 15px; line-height: 20px; }
.account { display: flex; align-items: center; justify-content: flex-end; color: #333; }
.account span { padding-top: 4px; }
.help { margin: 0 9px 0 17px; }
.help svg { margin-bottom: 2px; }
.gear { width: 28px; height: 30px; border: 1px solid #9a9a9a; border-right: 0; }

.content { flex: 1; min-height: 0; display: flex; }
.main { flex: 1; min-width: 0; overflow: hidden; display: flex; flex-direction: column; }
.hero { flex: none; padding: 20px 0 0 45px; background: repeating-linear-gradient(135deg, rgba(255, 255, 255, .5) 0 2px, transparent 2px 6px), linear-gradient(#fff, #fafdfd 55%, #ecf7f7); border-bottom: 1px solid #8b9a9f; }
.toolbar { display: flex; gap: 2px; width: 769px; height: 30px; }
.toolbar button, .variant button { flex: 1 1 0; background: #f0f1f0; color: #3c4040; }
.toolbar button:disabled, .variant button:disabled { color: #a9abaa; }
.toolbar .run { flex: 0 0 88px; gap: 11px; background: #173f57; color: #fff; }
.toolbar .config { flex: 0 0 115px; gap: 8px; }
.tabs { display: flex; margin: 22px 0 -1px; }
.tab { height: 28px; padding: 2px 10px 0; background: #fff; color: #4f9d97; border: 1px solid #35596b; border-bottom: 0; }
.work { flex: 1; display: flex; flex-direction: column; padding: 15px 0 12px 45px; }
.variant { display: flex; gap: 2px; width: 744px; height: 30px; }
.pick { flex: 0 0 198px; margin-right: 3px; display: flex; align-items: center; position: relative; color: #888; }
.pick select { width: 100%; height: 100%; padding-left: 6px; appearance: none; border: 1px solid #c4c4c4; background: #fff; font-family: "Liberation Sans", sans-serif; font-size: 12px; color: #666; }
.pick svg { position: absolute; right: 7px; }
.blank { flex: 0 0 240px; background: #f0f1f0; }
.dot { font-size: 7px; font-style: normal; }
.variant .big { font: 600 15px "Open Sans", sans-serif; }
.variant .less { font: 600 12px "Open Sans", sans-serif; }
.variant .bold { font: 800 18px "Open Sans", sans-serif; }
.variant .ital { font: italic 600 18px "Liberation Serif", serif; }
.grid { width: 100%; height: 32px; margin-top: 14px; border-collapse: collapse; table-layout: fixed; border: 1px solid #666; border-right: 0; font-size: 12px; }
.grid th { position: relative; padding: 0 0 0 10px; border: 1px solid #666; font-weight: 400; color: #666; }
.grid .c0 { width: 90px; padding: 0; }
.grid th:last-child { border-right: 0; }
.c1 { width: 198px; }
.c2 { width: 214px; }
.corner { position: absolute; right: 0; bottom: 0; }
.picks { display: flex; align-items: center; padding-left: 6px; gap: 17px; }
.picks input { appearance: none; width: 15px; height: 15px; border: 1px solid #888; background: #fff; }
.hscroll { margin: auto 0 0 100px; display: flex; align-items: center; gap: 9px; height: 10px; }
.hscroll span { width: 58px; height: 9px; border-radius: 5px; background: #8a8a8a; }

.panel { width: 513px; flex: none; display: flex; flex-direction: column; background: #fff; border-left: 2px solid #dcdcdc; }
.ptitle { flex: none; height: 20px; display: flex; align-items: center; background: #f0f0f0; padding-right: 8px; }
.ptitle h2 { flex: 1; text-align: center; font-size: 11px; line-height: 20px; padding-left: 17px; }
.ptabs { flex: none; display: flex; padding: 13px 0 0 9px; border-bottom: 1px solid #a5a5a5; }
.ptabs button { height: 27px; padding: 4px 11px 0 11px; color: #555; white-space: nowrap; }
.ptabs .on { height: 28px; margin-bottom: -1px; padding: 3px 10px 0; color: #4f9d97; background: #fff; border: 1px solid #1b4057; border-bottom: 0; }
.body { flex: 1; min-height: 0; margin-top: 11px; display: flex; padding: 0 9px; overflow: hidden; }
.list { flex: 1; min-width: 0; margin-top: -18px; clip-path: inset(18px 0 0 0); }
.row { height: 70px; padding-top: 10px; border-bottom: 1px solid #cfcfcf; color: #000; }
.row > label, .name { display: block; line-height: 16px; margin-bottom: 3px; font-weight: 500; }
.ctl { display: flex; gap: 5px; height: 30px; }
.lk { width: 61px; background: #f0f0f0; border: 1px solid #d0d0d0; color: #b0b0b0; }
.fix { color: #444; font-size: 10px; padding-top: 2px; }
.op { width: 79px; position: relative; display: flex; align-items: center; color: #aaa; }
.op select { width: 100%; height: 100%; appearance: none; border: 1px solid #cfcfcf; background: #fff; padding-right: 25px; text-align-last: center; font-size: 10px; color: #444; }
.op svg { position: absolute; right: 9px; }
.ctl input[type="text"] { width: 227px; border: 1px solid #cfcfcf; background: #fff; padding: 0 5px; font-size: 12px; color: #444; }
.off .ctl input[type="text"] { background: #f0f0f0; padding-left: 9px; font-size: 11px; color: #888; }
.off .ctl input.tiny[type="text"] { font-size: 8px; }
.sw { width: 59px; height: 30px; border-radius: 15px; background: #b1b1b1; color: #fff; font-weight: 600; display: flex; align-items: center; padding: 0 9px 0 4px; font-size: 12px; line-height: 14px; }
.sw input { appearance: none; width: 22px; height: 22px; border-radius: 50%; background: #fff; flex: none; }
.sw:has(:checked) { flex-direction: row-reverse; justify-content: space-between; background: #173f57; font-weight: 700; font-size: 11px; padding: 0 4px 0 10px; }
.off .sw:has(:checked) { background: #728d99; }
.vscroll { width: 14px; display: flex; flex-direction: column; align-items: center; padding: 10px 0; background: #fcfcfc; }
.vscroll span { width: 9px; height: 172px; margin: 183px 0 auto; border-radius: 5px; background: #616161; }
.pfoot { flex: none; height: 50px; display: flex; align-items: flex-start; justify-content: space-between; padding: 10px 8px 0 9px; background: #f0f0f0; }
.pfoot button { height: 30px; border: 1px solid #1b4057; }
.go { width: 74px; background: #173f57; color: #fff; font-weight: 500; gap: 1px; }
.reset { width: 73px; color: #666; }

.foot { flex: none; height: 49px; border-top: 1px solid #e2e2e2; display: flex; justify-content: center; }
.logo { display: flex; flex-direction: column; align-items: flex-end; padding-top: 2px; color: #1b4057; }
.logo strong { font: 900 24px/30px Lato, sans-serif; }
.logo span { margin-top: -4px; font: 600 11px/16px "Open Sans", sans-serif; }

.side { width: 41px; flex: none; display: flex; flex-direction: column; align-items: center; padding: 8px 0 12px; }
.side svg + svg { margin-top: 22px; }
.side svg:first-child { margin-bottom: -4px; }
.side hr { width: 28px; margin: 23px 0 0; border: 0; border-top: 1px solid #c0c0c0; }
.side .plus { margin-top: 25px; }
.side .low { margin: auto 0 16px; }
.side .low ~ svg + svg { margin-top: 25px; }

.taskbar { flex: none; height: 40px; display: flex; background: #cbe0e3; color: #222; font-family: "Noto Sans", sans-serif; }
.start { width: 44px; padding-right: 4px; }
.search { width: 283px; display: flex; align-items: center; gap: 11px; padding-left: 10px; background: #fff; border: 1px solid #c6cccd; }
.search input { flex: 1; min-width: 0; font-size: 13px; }
.search input::placeholder { color: #444; opacity: 1; }
.view { width: 50px; padding-right: 2px; }
.apps { width: 532px; flex: none; display: flex; }
.apps button { flex: 1 1 0; position: relative; border-top: 2px solid transparent; }
.apps .run1 { background: linear-gradient(#0f74c8, #0f74c8) bottom / 40px 2px no-repeat; }
.apps .run2 { background: linear-gradient(90deg, #0f74c8 80%, #6aa9d6 80%) bottom / 40px 2px no-repeat; }
.apps .active { background: linear-gradient(#0f74c8, #0f74c8) bottom / 100% 2px no-repeat, #e9f3f3; }
.badge { position: absolute; left: 22px; top: 17px; width: 16px; height: 14px; border-radius: 7px; background: #c4203a; color: #fff; font-weight: 700; font-size: 9px; line-height: 14px; text-align: center; }
.tray { flex: 1; display: flex; align-items: center; justify-content: flex-end; padding-right: 19px; margin-right: 2px; border-right: 1px solid #9fb5b8; }
.temp { margin: 0 27px 0 7px; font-size: 12px; }
.icons { display: flex; align-items: center; gap: 10px; }
.clock { margin: 0 17px 0 7px; line-height: 17px; text-align: center; font-size: 11px; }

.call { position: absolute; left: 5px; bottom: 0; height: 16px; display: flex; gap: 8px; overflow: hidden; color: #fff; }
.call span { height: 24px; padding: 0 6px; border-radius: 4px; background: rgba(60, 60, 60, .75); font: 500 11px/24px "Noto Sans", sans-serif; }
.call .add { width: 66px; padding: 6px 0 0 43px; }
.cursor { position: absolute; left: 1280px; top: 423px; }
```
